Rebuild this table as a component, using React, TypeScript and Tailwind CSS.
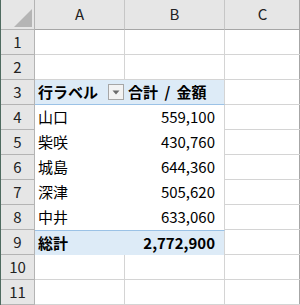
import React from "react";

type Row = { n: number; a?: string; b?: string; kind?: "head" | "body" | "total" };

const rows: Row[] = [
  { n: 1 },
  { n: 2 },
  { n: 3, a: "行ラベル", b: "合計 / 金額", kind: "head" },
  { n: 4, a: "山口", b: "559,100", kind: "body" },
  { n: 5, a: "柴咲", b: "430,760", kind: "body" },
  { n: 6, a: "城島", b: "644,360", kind: "body" },
  { n: 7, a: "深津", b: "505,620", kind: "body" },
  { n: 8, a: "中井", b: "633,060", kind: "body" },
  { n: 9, a: "総計", b: "2,772,900", kind: "total" },
  { n: 10 },
  { n: 11 },
];

const font = { fontFamily: '"Noto Sans CJK JP", "Noto Sans", sans-serif' };

function FilterButton() {
  return (
    <div className="ml-auto mr-[1px] flex h-[16px] w-[16px] items-center justify-center border border-[#a6a6a6] bg-[#f3f3f3]">
      <svg width="8" height="5" viewBox="0 0 8 5">
        <path d="M0.5 0.5 L7.5 0.5 L4 4.5 Z" fill="#6b6b6b" />
      </svg>
    </div>
  );
}

function SheetRow({ row }: { row: Row }) {
  const pivot = row.kind !== undefined;
  const blue = row.kind === "head" || row.kind === "total";
  const bold = blue ? "font-bold" : "";

  // pivot cells drop the normal gridlines
  const cellA = pivot
    ? `${blue ? "bg-[#ddebf7]" : "bg-white"} ${row.kind === "head" ? "border-b border-[#9bc2e6]" : ""} ${row.kind === "total" ? "border-t border-[#9bc2e6]" : ""}`
    : "border-b border-r border-[#d4d4d4]";

  return (
    <div className="flex h-[25px]">
      <div className="flex w-[34px] shrink-0 items-center justify-center border-b border-r border-[#b4b4b4] bg-[#e6e6e6] text-[15px] text-[#222]">
        {row.n}
      </div>
      <div className={`flex w-[90px] shrink-0 items-center pl-[3px] text-[15px] text-black ${bold} ${cellA}`}>
        <span>{row.a}</span>
        {row.kind === "head" && <FilterButton />}
      </div>
      <div
        className={`flex w-[100px] shrink-0 items-center text-[15px] text-black ${bold} ${cellA} ${
          row.kind === "head" ? "pl-[3px] [word-spacing:3px]" : "justify-end pr-[9px]"
        } ${pivot ? "border-r border-r-[#d4d4d4]" : ""}`}
      >
        {row.b}
      </div>
      <div className="w-[75px] shrink-0 border-b border-[#d4d4d4]" />
    </div>
  );
}

export default function App() {
  return (
    <div className="h-[305px] w-[300px] overflow-hidden bg-white" style={font}>
      <div className="h-full border-l border-r border-[#4f6b60] border-r-[#a6a6a6]">
        {/* column headers */}
        <div className="flex h-[30px] bg-[#e6e6e6] text-[15px] text-[#222]">
          <div className="relative w-[34px] shrink-0 border-b border-r border-[#b4b4b4]">
            <svg className="absolute bottom-[2px] right-[2px]" width="18" height="18" viewBox="0 0 18 18">
              <path d="M18 0 L18 18 L0 18 Z" fill="#b5b5b5" />
            </svg>
          </div>
          <div className="flex w-[90px] shrink-0 items-center justify-center border-b border-r border-b-[#a6a6a6] border-r-[#c6c6c6]">A</div>
          <div className="flex w-[100px] shrink-0 items-center justify-center border-b border-r border-b-[#a6a6a6] border-r-[#c6c6c6]">B</div>
          <div className="flex w-[75px] shrink-0 items-center justify-center border-b border-[#a6a6a6]">C</div>
        </div>
        {rows.map((r) => (
          <SheetRow key={r.n} row={r} />
        ))}
      </div>
    </div>
  );
}
